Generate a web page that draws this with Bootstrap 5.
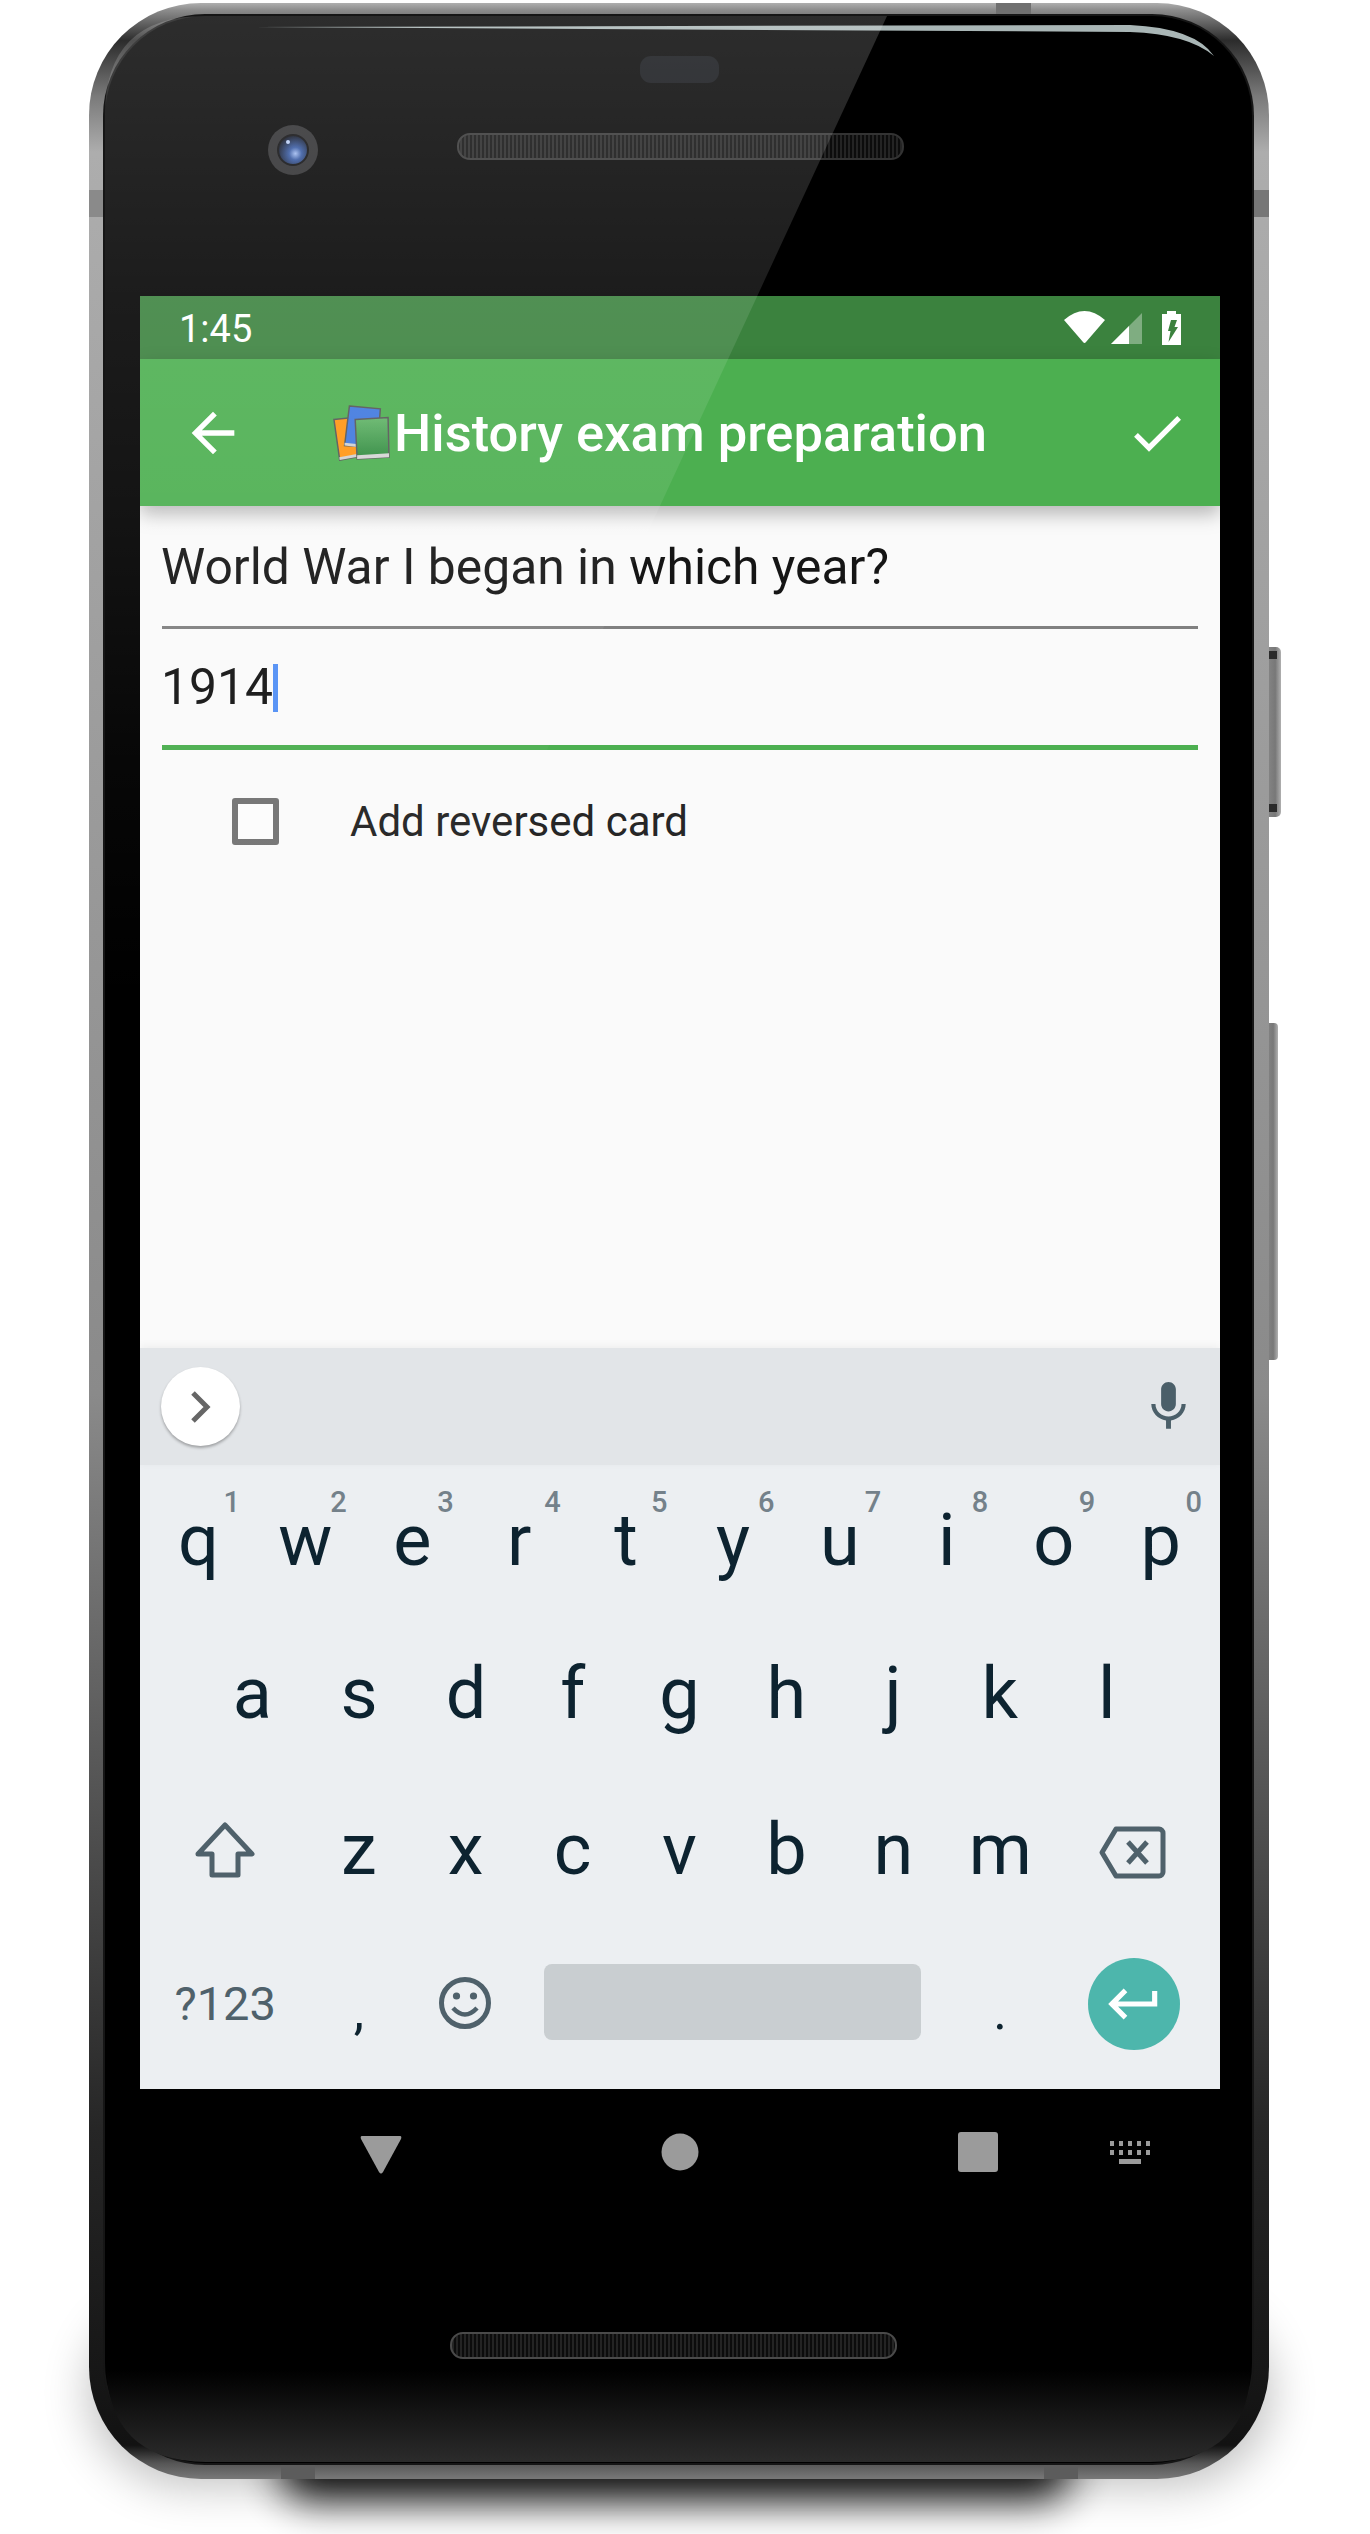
<!DOCTYPE html>
<html lang="en">

<head>
    <meta charset="UTF-8">
    <meta name="viewport" content="width=device-width, initial-scale=1.0">
    <title>History exam preparation</title>
    <link href="https://cdn.jsdelivr.net/npm/bootstrap@5.3.0/dist/css/bootstrap.min.css" rel="stylesheet">
    <style>
        body {
            background: #fff;
            font-family: Roboto, "Liberation Sans", sans-serif;
        }

        .phone-stage {
            position: relative;
            width: 1370px;
            height: 2534px;
            padding: 296px 150px 0 140px;
            overflow: hidden;
        }

        .phone-art,
        .phone-glare {
            position: absolute;
            top: 0;
            left: 0;
            width: 1370px;
            height: 2534px;
            pointer-events: none;
        }

        .phone-glare {
            z-index: 5;
        }

        .screen {
            position: relative;
            width: 1080px;
            overflow: hidden;
        }

        /* status bar and toolbar */
        .status-row {
            height: 63px;
            background: #3b823e;
            color: #fff;
            font-size: 38px;
            line-height: 1;
            padding: 0 39px;
        }

        .status-time {
            padding-top: 3px;
        }

        .app-toolbar {
            position: relative;
            z-index: 2;
            height: 147px;
            background: #4caf50;
            color: #fff;
            box-shadow: 0 8px 18px rgba(0, 0, 0, .28);
        }

        .back-icon {
            margin-left: 41px;
            margin-right: 87px;
        }

        .check-icon {
            margin-right: 31px;
        }

        .toolbar-title {
            font-size: 52.5px;
            font-weight: 500;
            margin-left: 4px;
            padding-top: 2px;
            line-height: 1;
        }

        /* form */
        .form-pane {
            height: 842px;
            background: #fafafa;
        }

        .edit-field {
            margin: 0 22px;
            font-size: 49.8px;
            color: #151515;
            line-height: 1;
            text-indent: -1px;
        }

        .field-question {
            height: 123px;
            padding-top: 37px;
            border-bottom: 3px solid #808080;
        }

        .field-answer {
            height: 121px;
            padding-top: 34px;
            border-bottom: 5px solid #4caf50;
        }

        .text-caret {
            display: inline-block;
            width: 5px;
            height: 48px;
            background: #5390f5;
            vertical-align: -8px;
        }

        .reverse-row {
            padding: 48px 0 0 92px;
            gap: 71px;
            font-size: 42px;
            color: #262626;
            line-height: 47px;
        }

        .reverse-box {
            width: 47px;
            height: 47px;
            border: 6px solid #757575;
            border-radius: 3px;
            background: #fcfcfc;
        }

        /* keyboard */
        .suggest-strip {
            position: relative;
            height: 117px;
            background: #e2e5e8;
            padding: 0 22px 0 21px;
            box-shadow: 0 -2px 8px rgba(0, 0, 0, .05);
        }

        .expand-btn {
            width: 79px;
            height: 79px;
            background: #fff;
            box-shadow: 0 2px 3px rgba(0, 0, 0, .3);
        }

        .chevron-icon {
            margin-left: -2px;
        }

        .keys-pane {
            height: 625px;
            padding: 0 6px 0 5px;
            background: #eceff2;
            color: #0d2330;
        }

        .key-row {
            height: 154px;
            font-size: 72px;
            line-height: 1;
        }

        .key-row-first {
            margin-top: -1px;
        }

        .key-row-home {
            margin-top: -1px;
            padding: 0 54px;
        }

        .key-row-lower {
            margin-top: 2px;
        }

        .kb-key {
            position: relative;
            flex: 1 1 0;
            display: flex;
            align-items: center;
            justify-content: center;
        }

        .kb-key-wide {
            flex-grow: 1.5;
        }

        .kb-key-space {
            flex-grow: 4;
        }

        .key-hint {
            position: absolute;
            top: 24px;
            right: 12px;
            font-size: 29px;
            line-height: 1;
            font-weight: 500;
            color: #74818a;
        }

        .key-symbols {
            font-size: 47px;
            color: #4f616b;
            margin-top: -2px;
        }

        .key-punct {
            font-size: 52px;
            padding-top: 16px;
        }

        .delete-icon {
            margin-top: 4px;
            margin-left: -3px;
        }

        .smile-icon {
            margin-left: -1px;
            margin-top: -2px;
        }

        .space-bar {
            width: 377px;
            height: 76px;
            margin-top: -4px;
            background: #c9ced1;
            border-radius: 8px;
        }

        .enter-btn {
            width: 92px;
            height: 92px;
            background: #4db6ac;
        }

        /* nav bar */
        .nav-keys {
            height: 126px;
            padding-left: 92px;
            background: #000;
        }

        .nav-slot {
            width: 298.5px;
        }

        .nav-back-icon {
            margin-top: 6px;
        }

        .nav-kbd-icon {
            margin-left: -18px;
        }
    </style>
</head>

<body>

    <div class="phone-stage">

        <!-- phone body -->
        <svg class="phone-art" viewBox="0 0 1370 2534">
            <defs>
                <linearGradient id="metal" x1="0" y1="0" x2="0" y2="2534" gradientUnits="userSpaceOnUse">
                    <stop offset="0" stop-color="#bdbdbd" />
                    <stop offset="0.004" stop-color="#8c8c8c" />
                    <stop offset="0.016" stop-color="#2c2c2c" />
                    <stop offset="0.038" stop-color="#7a7a7a" />
                    <stop offset="0.06" stop-color="#adadad" />
                    <stop offset="0.55" stop-color="#8a8a8a" />
                    <stop offset="0.84" stop-color="#262626" />
                    <stop offset="0.965" stop-color="#121212" />
                    <stop offset="0.972" stop-color="#555" />
                    <stop offset="0.978" stop-color="#777" />
                </linearGradient>
                <linearGradient id="glassFloor" x1="0" y1="2370" x2="0" y2="2463" gradientUnits="userSpaceOnUse">
                    <stop offset="0" stop-color="#000" />
                    <stop offset="1" stop-color="#2c2c2c" />
                </linearGradient>
                <linearGradient id="btnMetal" x1="0" y1="0" x2="1" y2="0">
                    <stop offset="0" stop-color="#8f8f8f" />
                    <stop offset="0.7" stop-color="#787878" />
                    <stop offset="1" stop-color="#b0b0b0" />
                </linearGradient>
                <linearGradient id="bookGreen" x1="0" y1="0" x2="0" y2="1">
                    <stop offset="0" stop-color="#62b568" />
                    <stop offset="1" stop-color="#2c873b" />
                </linearGradient>
                <radialGradient id="lens" cx="0.58" cy="0.62" r="0.6">
                    <stop offset="0" stop-color="#9db8ee" />
                    <stop offset="0.35" stop-color="#33569f" />
                    <stop offset="1" stop-color="#0d1220" />
                </radialGradient>
                <pattern id="grille" width="4" height="4" patternUnits="userSpaceOnUse">
                    <rect width="4" height="4" fill="#0c0c0c" />
                    <rect width="2" height="4" fill="#242424" />
                </pattern>
                <filter id="blurWide" x="-30%" y="-60%" width="160%" height="220%">
                    <feGaussianBlur stdDeviation="24" />
                </filter>
                <filter id="blurFloor" x="-30%" y="-150%" width="160%" height="400%">
                    <feGaussianBlur stdDeviation="20" />
                </filter>
            </defs>

            <!-- shadow -->
            <rect x="90" y="2300" width="1180" height="185" rx="100" fill="#000" opacity=".26" filter="url(#blurWide)" />
            <rect x="280" y="2430" width="790" height="70" rx="30" fill="#000" opacity=".95" filter="url(#blurFloor)" />

            <!-- side buttons -->
            <rect x="1262" y="647" width="19" height="170" rx="5" fill="url(#btnMetal)" />
            <rect x="1265" y="651" width="12" height="8" fill="#2b2b2b" />
            <rect x="1265" y="804" width="12" height="8" fill="#2b2b2b" />
            <rect x="1262" y="1023" width="16" height="337" rx="4" fill="url(#btnMetal)" />

            <!-- frame -->
            <rect x="89" y="3" width="1180" height="2476" rx="112" fill="url(#metal)" />
            <rect x="89" y="190" width="16" height="27" fill="#8a8a8a" />
            <rect x="1253" y="190" width="16" height="27" fill="#777" />
            <rect x="996" y="3" width="35" height="13" fill="#707070" />
            <rect x="281" y="2463" width="34" height="16" fill="#5c5c5c" />
            <rect x="1044" y="2463" width="34" height="16" fill="#5c5c5c" />

            <!-- glass -->
            <rect x="103" y="14" width="1151" height="2451" rx="102" fill="#161616" />
            <rect x="105" y="16" width="1147" height="2447" rx="100" fill="#000" />
            <path d="M106 2370H1251V2362Q1251 2461 1150 2462H206Q107 2461 106 2362Z" fill="url(#glassFloor)" />
            <path d="M250 27L1130 25Q1195 28 1214 56Q1188 34 1130 32L250 27Z" fill="#a9b6b6" />

            <!-- earpiece sensor, camera, speakers -->
            <rect x="640" y="56" width="79" height="27" rx="11" fill="#0e1014" />
            <circle cx="293" cy="150" r="25" fill="#2b2b2d" />
            <circle cx="293" cy="150" r="15" fill="url(#lens)" stroke="#0a0a0c" stroke-width="2" />
            <circle cx="288" cy="142" r="2" fill="#b9cdf5" />
            <rect x="458" y="134" width="445" height="25" rx="12" fill="url(#grille)" stroke="#333" stroke-width="2" />
            <rect x="451" y="2333" width="445" height="25" rx="12" fill="url(#grille)" stroke="#4a4a4a" stroke-width="2" />
        </svg>

        <div class="screen">

            <div class="status-row d-flex align-items-center justify-content-between">
                <span class="status-time">1:45</span>
                <svg width="117" height="34" viewBox="0 0 117 34">
                    <path d="M0 9Q20.5 -9 41 9L22 31Q20.5 33 19 31Z" fill="#fff" />
                    <path d="M47 33L78 2V33Z" fill="#fff" opacity=".35" />
                    <path d="M47 33L65 15V33Z" fill="#fff" />
                    <path d="M103 0H112V3H117V34H98V3H103Z" fill="#fff" />
                    <path d="M107 9L113 9L110.5 16L114 16L104.5 31L106.5 20L104 20Z" fill="#3b823e" />
                </svg>
            </div>

            <div class="app-toolbar d-flex align-items-center">
                <svg class="back-icon" width="64" height="64" viewBox="0 0 24 24">
                    <path d="M20 11H7.83l5.59-5.59L12 4l-8 8 8 8 1.41-1.41L7.83 13H20v-2z" fill="#fff" />
                </svg>
                <svg width="58" height="58" viewBox="0 0 60 58">
                    <path d="M2 15L22 13L30 53L8 57Z" fill="#ff9512" stroke="#555" stroke-width="1.5" />
                    <path d="M7.5 54L30 50L30 53L8 57Z" fill="#d0d0d0" />
                    <path d="M18 1L50 4L47 44L13 42Z" fill="#3f78de" stroke="#555" stroke-width="1.5" />
                    <path d="M13 39L30 41V44L13 42Z" fill="#d0d0d0" />
                    <path d="M24 15L58 13L59 54L26 56Z" fill="url(#bookGreen)" stroke="#555" stroke-width="1.5" />
                    <path d="M26 52L59 50L59 54L26 56Z" fill="#d4d4d4" />
                </svg>
                <span class="toolbar-title">History exam preparation</span>
                <svg class="check-icon ms-auto" width="64" height="64" viewBox="0 0 24 24">
                    <path d="M9 16.17L4.83 12l-1.42 1.41L9 19 21 7l-1.41-1.41z" fill="#fff" />
                </svg>
            </div>

            <div class="form-pane">
                <div class="edit-field field-question">World War I began in which year?</div>
                <div class="edit-field field-answer">1914<span class="text-caret"></span></div>
                <div class="reverse-row d-flex align-items-center">
                    <div class="reverse-box"></div>
                    <span>Add reversed card</span>
                </div>
            </div>

            <div class="suggest-strip d-flex align-items-center justify-content-between">
                <div class="expand-btn rounded-circle d-flex align-items-center justify-content-center">
                    <svg class="chevron-icon" width="22" height="34" viewBox="0 0 22 34">
                        <path d="M4 3L18 17L4 31" fill="none" stroke="#666" stroke-width="5" />
                    </svg>
                </div>
                <svg width="59" height="59" viewBox="0 0 24 24">
                    <path d="M12 14c1.66 0 2.99-1.34 2.99-3L15 5c0-1.66-1.34-3-3-3S9 3.34 9 5v6c0 1.66 1.34 3 3 3zm5.3-3c0 3-2.54 5.1-5.3 5.1S6.7 14 6.7 11H5c0 3.41 2.72 6.23 6 6.72V21h2v-3.28c3.28-.48 6-3.3 6-6.72h-1.7z" fill="#4b5f69" />
                </svg>
            </div>

            <div class="keys-pane">
                <div class="key-row key-row-first d-flex">
                    <div class="kb-key">q<span class="key-hint">1</span></div>
                    <div class="kb-key">w<span class="key-hint">2</span></div>
                    <div class="kb-key">e<span class="key-hint">3</span></div>
                    <div class="kb-key">r<span class="key-hint">4</span></div>
                    <div class="kb-key">t<span class="key-hint">5</span></div>
                    <div class="kb-key">y<span class="key-hint">6</span></div>
                    <div class="kb-key">u<span class="key-hint">7</span></div>
                    <div class="kb-key">i<span class="key-hint">8</span></div>
                    <div class="kb-key">o<span class="key-hint">9</span></div>
                    <div class="kb-key">p<span class="key-hint">0</span></div>
                </div>
                <div class="key-row key-row-home d-flex">
                    <div class="kb-key">a</div>
                    <div class="kb-key">s</div>
                    <div class="kb-key">d</div>
                    <div class="kb-key">f</div>
                    <div class="kb-key">g</div>
                    <div class="kb-key">h</div>
                    <div class="kb-key">j</div>
                    <div class="kb-key">k</div>
                    <div class="kb-key">l</div>
                </div>
                <div class="key-row key-row-lower d-flex">
                    <div class="kb-key kb-key-wide">
                        <svg width="60" height="56" viewBox="0 0 60 56">
                            <path d="M30 3L57 32H43V53H17V32H3Z" fill="none" stroke="#4f616b" stroke-width="5" stroke-linejoin="round" />
                        </svg>
                    </div>
                    <div class="kb-key">z</div>
                    <div class="kb-key">x</div>
                    <div class="kb-key">c</div>
                    <div class="kb-key">v</div>
                    <div class="kb-key">b</div>
                    <div class="kb-key">n</div>
                    <div class="kb-key">m</div>
                    <div class="kb-key kb-key-wide">
                        <svg class="delete-icon" width="67" height="53" viewBox="0 0 67 53">
                            <path d="M17 3H60A4 4 0 0 1 64 7V46A4 4 0 0 1 60 50H17L3 26.5Z" fill="none" stroke="#4f616b" stroke-width="5" stroke-linejoin="round" />
                            <path d="M29 16L48 37M48 16L29 37" fill="none" stroke="#4f616b" stroke-width="5" />
                        </svg>
                    </div>
                </div>
                <div class="key-row d-flex">
                    <div class="kb-key kb-key-wide key-symbols">?123</div>
                    <div class="kb-key key-punct">,</div>
                    <div class="kb-key">
                        <svg class="smile-icon" width="52" height="54" viewBox="0 0 52 54">
                            <circle cx="26" cy="27" r="23.5" fill="none" stroke="#4f616b" stroke-width="5" />
                            <circle cx="17.5" cy="20" r="3.6" fill="#4f616b" />
                            <circle cx="34.5" cy="20" r="3.6" fill="#4f616b" />
                            <path d="M14 32Q26 45 38 32" fill="none" stroke="#4f616b" stroke-width="4.5" />
                        </svg>
                    </div>
                    <div class="kb-key kb-key-space">
                        <div class="space-bar"></div>
                    </div>
                    <div class="kb-key key-punct">.</div>
                    <div class="kb-key kb-key-wide">
                        <div class="enter-btn rounded-circle d-flex align-items-center justify-content-center">
                            <svg width="62" height="62" viewBox="0 0 24 24">
                                <path d="M19 7v4H5.83l3.58-3.59L8 6l-6 6 6 6 1.41-1.41L5.83 13H21V7z" fill="#fff" />
                            </svg>
                        </div>
                    </div>
                </div>
            </div>

            <div class="nav-keys d-flex align-items-center">
                <div class="nav-slot d-flex justify-content-center">
                    <svg class="nav-back-icon" width="42" height="38" viewBox="0 0 42 38">
                        <path d="M2 0H40Q42 0 41 3L23 36Q21 39 19 36L1 3Q0 0 2 0Z" fill="#9b9b9b" />
                    </svg>
                </div>
                <div class="nav-slot d-flex justify-content-center">
                    <svg width="38" height="38" viewBox="0 0 38 38">
                        <circle cx="19" cy="19" r="18.5" fill="#9b9b9b" />
                    </svg>
                </div>
                <div class="nav-slot d-flex justify-content-center">
                    <svg width="40" height="40" viewBox="0 0 40 40">
                        <rect width="40" height="40" rx="3" fill="#9b9b9b" />
                    </svg>
                </div>
                <svg class="nav-kbd-icon" width="41" height="23" viewBox="0 0 41 23" fill="#9b9b9b">
                    <path d="M0 0h4v5H0zM9 0h4v5H9zM18 0h4v5h-4zM27 0h4v5h-4zM36 0h4v5h-4zM0 9h4v5H0zM9 9h4v5H9zM18 9h4v5h-4zM27 9h4v5h-4zM36 9h4v5h-4zM9 18h22v5H9z" />
                </svg>
            </div>
        </div>

        <!-- light reflection across the glass -->
        <svg class="phone-glare" viewBox="0 0 1370 2534">
            <defs>
                <linearGradient id="glareFade" x1="0" y1="0" x2="0" y2="1000" gradientUnits="userSpaceOnUse">
                    <stop offset="0" stop-color="#fff" stop-opacity=".18" />
                    <stop offset="0.3" stop-color="#fff" stop-opacity=".11" />
                    <stop offset="0.5" stop-color="#fff" stop-opacity=".08" />
                    <stop offset="0.75" stop-color="#fff" stop-opacity=".03" />
                    <stop offset="1" stop-color="#fff" stop-opacity="0" />
                </linearGradient>
            </defs>
            <path d="M105 1000V115Q105 16 205 16H887L431 1000Z" fill="url(#glareFade)" />
        </svg>
    </div>

    <script src="https://cdn.jsdelivr.net/npm/bootstrap@5.3.0/dist/js/bootstrap.bundle.min.js"></script>
</body>

</html>
